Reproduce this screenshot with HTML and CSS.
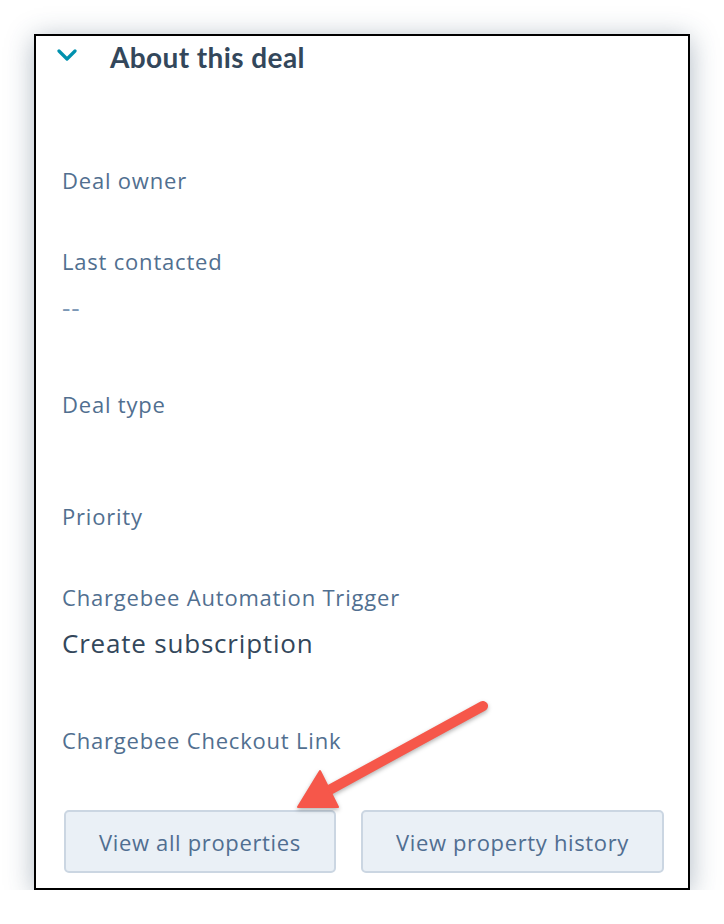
FILE: index.html
```html
<!DOCTYPE html>
<html lang="en">
<head>
    <meta charset="UTF-8">
    <meta name="viewport" content="width=device-width, initial-scale=1.0">
    <title>About this deal</title>
    <link rel="stylesheet" href="styles.css">
</head>
<body>
    <div class="card">
        <div class="card-header">
            <svg class="chevron" width="20" height="12" viewBox="0 0 20 12">
                <path d="M2 2 L10 10 L18 2" fill="none" stroke="#0091ae" stroke-width="3.2" stroke-linecap="round" stroke-linejoin="round"/>
            </svg>
            <h2 class="card-title">About this deal</h2>
        </div>

        <div class="fields">
            <div class="field">
                <div class="field-label">Deal owner</div>
            </div>
            <div class="field">
                <div class="field-label">Last contacted</div>
                <div class="field-value field-value--muted">--</div>
            </div>
            <div class="field">
                <div class="field-label">Deal type</div>
                <div class="field-value field-value--blank"></div>
            </div>
            <div class="field">
                <div class="field-label">Priority</div>
            </div>
            <div class="field">
                <div class="field-label">Chargebee Automation Trigger</div>
                <div class="field-value">Create subscription</div>
            </div>
            <div class="field">
                <div class="field-label">Chargebee Checkout Link</div>
            </div>
        </div>

        <div class="actions">
            <button class="button">View all properties</button>
            <button class="button">View property history</button>
        </div>
    </div>

    <!-- callout arrow pointing at the first button -->
    <svg class="callout" width="724" height="924" viewBox="0 0 724 924">
        <line x1="483" y1="706" x2="322" y2="794" stroke="#f6574a" stroke-width="10" stroke-linecap="round"/>
        <polygon points="298,807 320,771 338,807" fill="#f6574a" stroke="#f6574a" stroke-width="2" stroke-linejoin="round"/>
    </svg>
</body>
</html>
```

FILE: styles.css
```css
body {
    margin: 0;
    background-color: #ffffff;
    font-family: "Open Sans", Lato, sans-serif;
    color: #33475b;
}
.card {
    box-sizing: border-box;
    width: 656px;
    height: 856px;
    margin: 34px 0 0 34px;
    border: 2px solid #000000;
    background-color: #ffffff;
    box-shadow: 0 4px 26px rgba(44, 72, 98, 0.38);
    padding: 1px 0 15px 0;
    display: flex;
    flex-direction: column;
}
.card-header {
    display: flex;
    align-items: center;
    height: 40px;
    padding-left: 21px;
}
.chevron {
    display: block;
    margin-top: -4px;
}
.card-title {
    margin: 0 0 0 33px;
    font-family: Lato, "Open Sans", sans-serif;
    font-size: 28px;
    font-weight: 700;
    line-height: 40px;
    letter-spacing: 0.4px;
    color: #33475b;
}
.fields {
    padding: 88px 0 0 26px;
}
.field {
    margin-bottom: 51px;
}
.field-label {
    font-size: 22px;
    line-height: 30px;
    letter-spacing: 0.8px;
    color: #516f90;
}
.field-value {
    padding: 11px 0 11px 0;
    font-size: 26px;
    line-height: 40px;
    letter-spacing: 0.8px;
    color: #33475b;
}
.field-value--muted {
    color: #7c98b6;
}
.field-value--blank {
    padding: 0;
    height: 31px;
}
.actions {
    display: flex;
    gap: 25px;
    margin-top: auto;
    padding-left: 28px;
}
.button {
    height: 63px;
    padding: 0 33px;
    background-color: #eaf0f6;
    border: 2px solid #cbd6e2;
    border-radius: 5px;
    font-family: "Open Sans", Lato, sans-serif;
    font-size: 22px;
    letter-spacing: 0.65px;
    color: #506e91;
    cursor: pointer;
}
.callout {
    position: absolute;
    top: 0;
    left: 0;
    pointer-events: none;
    filter: drop-shadow(0 2px 2px rgba(0, 0, 0, 0.3));
}
```
